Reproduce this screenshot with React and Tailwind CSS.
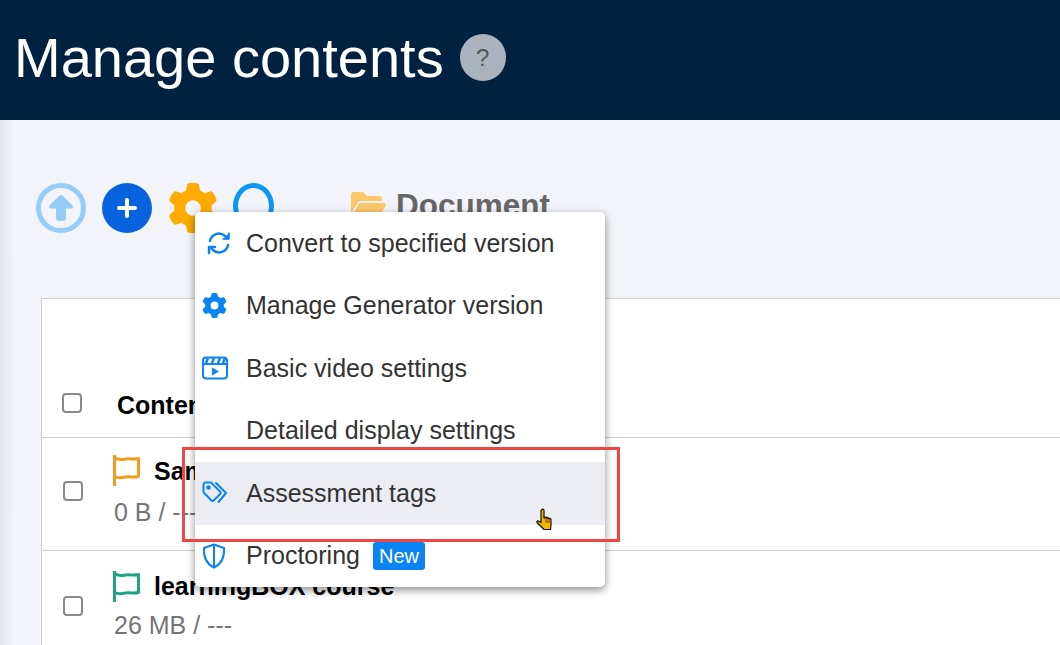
import { FaGear } from 'react-icons/fa6'

const font = { fontFamily: '"Liberation Sans", Arial, sans-serif' }

function Flag({ color }) {
  return (
    <svg width="27" height="31" viewBox="0 0 27 31" fill="none" stroke={color} strokeWidth="3">
      <path d="M1.500 0v31" strokeLinecap="round" />
      <path d="M1.500 2.500c4 3 7 2.500 11 1.500s8 1 13-.5v18c-5 1.500-9-.5-13 .5s-7 1.500-11-.5" strokeLinejoin="round" />
    </svg>
  )
}

function Checkbox() {
  return <div className="w-[20px] h-[20px] rounded-[4px] border-2 border-[#8a8a8a] bg-white" />
}

function ConvertIcon() {
  return (
    <svg width="24" height="24" viewBox="0 0 24 24" fill="none" stroke="#0b84f3" strokeWidth="2.400" strokeLinecap="round" strokeLinejoin="round">
      <path d="M3 10a9 9 0 0 1 15-5l2.500 2.500" />
      <path d="M22 2v6h-6" fill="#0b84f3" strokeWidth="1.600" />
      <path d="M21 14a9 9 0 0 1-15 5l-2.500-2.500" />
      <path d="M2 22v-6h6" />
    </svg>
  )
}

function VideoIcon() {
  return (
    <svg width="26" height="24" viewBox="0 0 26 24" fill="none" stroke="#0b84f3" strokeWidth="2">
      <rect x="1" y="1.500" width="24" height="21" rx="3" />
      <path d="M1 8h24" />
      <path d="M6 2l-2 5M12 2l-2 5M18 2l-2 5M23 2l-2 5" strokeWidth="2.500" />
      <path d="M10 11.500l7 4-7 4z" fill="#0b84f3" stroke="none" />
    </svg>
  )
}

function TagsIcon() {
  return (
    <svg width="26" height="24" viewBox="0 0 26 24" fill="none" stroke="#0b84f3" strokeWidth="2" strokeLinejoin="round" strokeLinecap="round">
      <path d="M1.500 3.500a2 2 0 0 1 2-2h5.500l9 9a2 2 0 0 1 0 2.800l-6 6a2 2 0 0 1-2.800 0l-7.700-8z" />
      <circle cx="6.500" cy="6.500" r="1.300" fill="#0b84f3" />
      <path d="M14 2l10 10-7.500 9" />
    </svg>
  )
}

function ShieldIcon() {
  return (
    <svg width="24" height="26" viewBox="0 0 24 26" fill="none" stroke="#0b84f3" strokeWidth="2" strokeLinejoin="round">
      <path d="M12 1.500l10 3.500c.5 8-1.500 15.500-10 19.500C3.500 20.500 1.500 13 2 5z" />
      <path d="M12 1.500v23" />
    </svg>
  )
}

function HandCursor() {
  return (
    <svg width="18" height="23" viewBox="0 0 18 23">
      <path d="M6 1.500c1-.8 2 0 2 1V10l1 .2V9h1.500l.5 1.500 1-.8 1 1 1-.4 1 1.200v5.500L14.500 21.500H8L4.500 18 1 14.500c-.5-1 .5-2 1.500-1.500L5 14.500V2.500z" fill="#f5b400" stroke="#111" strokeWidth="1.200" strokeLinejoin="round" />
      <path d="M10 11v4M12 11v4M14 11v4" stroke="#7a3b00" strokeWidth="1" />
    </svg>
  )
}

const menuItems = [
  { label: 'Convert to specified version', icon: <span className="pl-[5px]"><ConvertIcon /></span> },
  { label: 'Manage Generator version', icon: <FaGear className="text-[#0b84f3] text-[25px]" /> },
  { label: 'Basic video settings', icon: <VideoIcon /> },
  { label: 'Detailed display settings', icon: null },
  { label: 'Assessment tags', icon: <TagsIcon />, active: true },
  { label: 'Proctoring', icon: <ShieldIcon />, badge: 'New' },
]

function Row({ flag, name, meta, rowClass, metaClass }) {
  return (
    <div className={`flex items-center ${rowClass}`}>
      <div className="w-[61px] pl-[21px] shrink-0"><Checkbox /></div>
      <div className="pl-[10px]">
        <div className="flex items-center gap-[14px]">
          <Flag color={flag} />
          <span className="text-[25px] font-bold text-black leading-[32px]">{name}</span>
        </div>
        <div className={`text-[25px] text-[#757575] leading-[32px] pl-[1px] ${metaClass}`}>{meta}</div>
      </div>
    </div>
  )
}

export default function App() {
  return (
    <div className="relative w-[1060px] h-[645px] overflow-hidden bg-[#f3f4f9]" style={font}>
      {/* Header */}
      <div className="h-[120px] bg-[#002140] flex items-center pl-[14px] pb-[5px] gap-[16px]">
        <h1 className="text-[56px] text-white font-normal leading-none">Manage contents</h1>
        <div className="w-[46px] h-[47px] rounded-full bg-[#aab2bd] flex items-center justify-center text-[24px] text-[#555]">?</div>
      </div>

      <div className="absolute left-0 top-[120px] bottom-0 w-[14px] bg-gradient-to-r from-[#e3e4e9] to-[#f3f4f9]" />

      {/* Toolbar */}
      <div className="relative h-[178px] pt-[63px] pl-[36px] flex items-start">
        <div className="w-[50px] h-[50px] rounded-full border-[5px] border-[#93cdf8] flex items-center justify-center">
          <svg width="26" height="28" viewBox="0 0 26 28" fill="#93cdf8">
            <path d="M13 1a2 2 0 0 1 1.500.6l10 10c1 1 .5 2.900-1 2.900H18v9.500a3 3 0 0 1-3 3h-4a3 3 0 0 1-3-3v-9.500H2.500c-1.500 0-2-1.900-1-2.900l10-10A2 2 0 0 1 13 1z" />
          </svg>
        </div>
        <div className="ml-[16px] w-[50px] h-[50px] rounded-full bg-[#0663dd] flex items-center justify-center">
          <svg width="22" height="22" viewBox="0 0 22 22" stroke="#fff" strokeWidth="4" strokeLinecap="round">
            <path d="M11 3v16M3 11h16" />
          </svg>
        </div>
        <FaGear className="ml-[16px] text-[#fdab00] text-[50px]" />
        <div className="ml-[15px] w-[41px] h-[46px] rounded-[50%] border-[5px] border-[#0b97f3]" />
        <div className="ml-[76px] flex items-center gap-[10px] h-[46px]">
          <svg width="36" height="30" viewBox="0 0 36 30" fill="#fdc76a">
            <path d="M1 4a3 3 0 0 1 3-3h9l4 4h12a3 3 0 0 1 3 3v2H9L1 22z" />
            <path d="M9 12h25c1.500 0 2.200 1 1.700 2.200L29 28H1z" />
          </svg>
          <span className="text-[31.500px] font-bold text-[#666] leading-none">Document</span>
        </div>
      </div>

      {/* Table */}
      <div className="ml-[41px] bg-white border-l border-t border-[#cfcfcf] h-[400px]">
        <div className="h-[139px] flex items-end border-b border-[#cfcfcf] pb-[16px]">
          <div className="w-[61px] pl-[20px] shrink-0 mb-[8px]"><Checkbox /></div>
          <span className="pl-[14px] text-[25px] font-bold text-black leading-[32px]">Contents</span>
        </div>
        <Row flag="#f39c1f" name="Sample" meta="0 B / ---" rowClass="h-[113px] pb-[6px] border-b border-[#cfcfcf]" metaClass="mt-[9px]" />
        <Row flag="#1fa384" name="learningBOX course" meta="26 MB / ---" rowClass="h-[110px] pb-[1px]" metaClass="mt-[7px]" />
      </div>

      {/* Dropdown menu */}
      <div className="absolute left-[195px] top-[212px] w-[410px] h-[375px] bg-white rounded-[5px] shadow-[0_3px_8px_rgba(0,0,0,0.45)]">
        {menuItems.map((item) => (
          <div key={item.label} className={`h-[62.5px] flex items-center ${item.active ? 'bg-[#ecedf2]' : ''}`}>
            <div className="w-[51px] pl-[7px] shrink-0 flex items-center">{item.icon}</div>
            <span className="text-[25px] text-[#333] leading-none">{item.label}</span>
            {item.badge && (
              <span className="ml-[13px] h-[28px] px-[6px] rounded-[3px] bg-[#0b84f3] text-white text-[20px] flex items-center">{item.badge}</span>
            )}
          </div>
        ))}
      </div>

      {/* Red annotation frame */}
      <div className="absolute left-[182px] top-[447px] w-[438px] h-[95px] border-[3px] border-[#f44545]" />

      <div className="absolute left-[536px] top-[508px]"><HandCursor /></div>
    </div>
  )
}
